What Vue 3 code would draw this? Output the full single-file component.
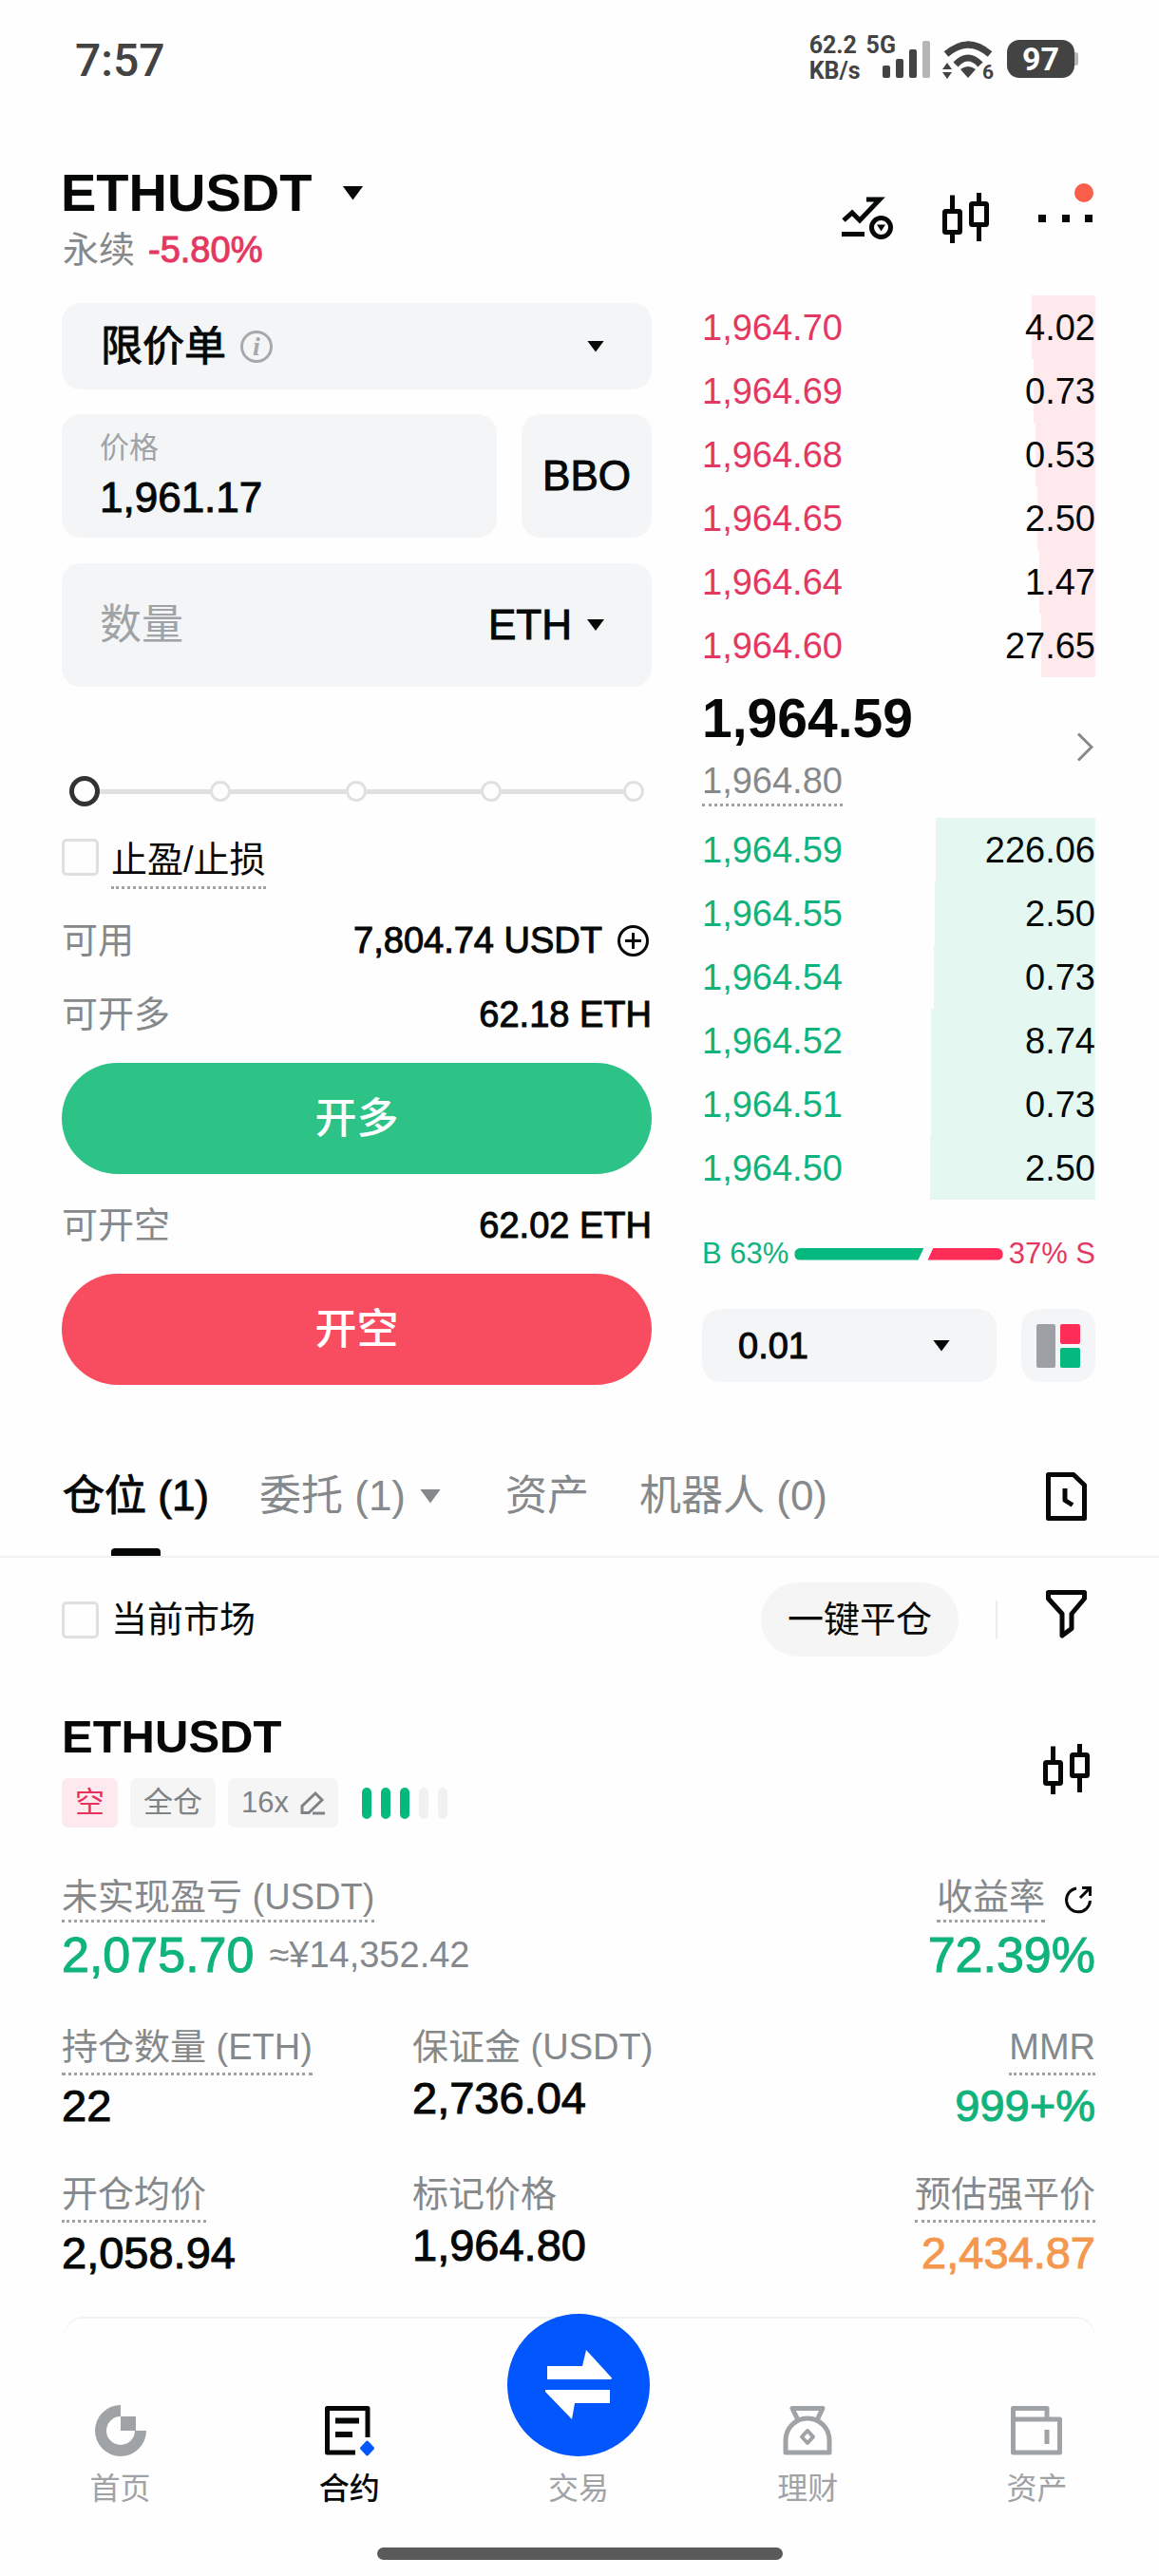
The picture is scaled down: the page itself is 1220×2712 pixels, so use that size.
<script setup>
import { ref } from 'vue'

const orderType = ref('limit')
const price = ref('1,961.17')
const amount = ref('')
const unit = ref('ETH')
const percent = ref(0)
const tpsl = ref(false)
const onlyCurrent = ref(false)
const tick = ref('0.01')

const asks = [
  { price: '1,964.70', size: '4.02', depth: 16.2 },
  { price: '1,964.69', size: '0.73', depth: 15.7 },
  { price: '1,964.68', size: '0.53', depth: 15.2 },
  { price: '1,964.65', size: '2.50', depth: 14.7 },
  { price: '1,964.64', size: '1.47', depth: 14.3 },
  { price: '1,964.60', size: '27.65', depth: 13.8 },
]
const bids = [
  { price: '1,964.59', size: '226.06', depth: 40.6 },
  { price: '1,964.55', size: '2.50', depth: 40.8 },
  { price: '1,964.54', size: '0.73', depth: 41 },
  { price: '1,964.52', size: '8.74', depth: 41.8 },
  { price: '1,964.51', size: '0.73', depth: 41.9 },
  { price: '1,964.50', size: '2.50', depth: 42 },
]
const ratio = { buy: 63, sell: 37 }

const tabs = [
  { name: '仓位 (1)', active: true },
  { name: '委托 (1)', menu: true },
  { name: '资产' },
  { name: '机器人 (0)' },
]

const stats = [
  { label: '持仓数量 (ETH)', value: '22', dotted: true },
  { label: '保证金 (USDT)', value: '2,736.04' },
  { label: 'MMR', value: '999+%', dotted: true, tone: 'up' },
  { label: '开仓均价', value: '2,058.94', dotted: true },
  { label: '标记价格', value: '1,964.80' },
  { label: '预估强平价', value: '2,434.87', dotted: true, tone: 'warn' },
]
</script>

<template>
  <div class="page">
    <svg class="defs" aria-hidden="true">
      <symbol id="candles" viewBox="0 0 49 53">
        <g fill="none" stroke="#050807" stroke-width="5">
          <path d="M10.5 2.5V18M10.5 43V53M38.5 0V10M38.5 35V51" />
          <rect x="2.5" y="19.5" width="16" height="22" rx="1" />
          <rect x="30.5" y="11.5" width="16" height="22" rx="1" />
        </g>
      </symbol>
    </svg>

    <div class="status">
      <span class="clock">7:57</span>
      <div class="status-right">
        <div class="speed"><span>62.2</span><span>KB/s</span></div>
        <span class="net">5G</span>
        <svg class="signal" width="50" height="39" viewBox="0 0 50 39">
          <g fill="#434343">
            <rect x="0" y="26" width="8" height="13" rx="2" />
            <rect x="14" y="19" width="8" height="20" rx="2" />
            <rect x="28" y="9" width="8" height="30" rx="2" />
          </g>
          <rect x="42" y="0" width="8" height="39" rx="2" fill="#b5b5b5" />
        </svg>
        <svg class="wifi" width="56" height="48" viewBox="0 0 56 48">
          <g fill="none" stroke="#434343" stroke-width="7">
            <path d="M4 15Q27 -5 50 15" />
            <path d="M14 26Q27 12 40 26" />
          </g>
          <path d="M19 31Q27 25 35 31L27 40ZM5 24L10 31H0ZM5 41L10 34H0Z" fill="#434343" />
          <text x="42" y="41" font-size="21" font-weight="700" fill="#434343">6</text>
        </svg>
        <div class="battery">97</div>
      </div>
    </div>

    <header class="head">
      <div>
        <button class="symbol" type="button"><h1>ETHUSDT</h1><i class="caret large"></i></button>
        <p class="change"><span class="muted">永续</span><span class="down med">-5.80%</span></p>
      </div>
      <div class="head-icons">
        <button type="button" aria-label="指标">
          <svg width="54" height="46" viewBox="0 0 54 46">
            <g fill="none" stroke="#050807" stroke-width="5">
              <path d="M2 25L11 17L19 25L40 3H26M0 39.500H24" />
              <circle cx="41.500" cy="32.500" r="10" />
            </g>
            <path d="M37 29.500H46L41.500 36.500Z" fill="#050807" />
          </svg>
        </button>
        <button type="button" aria-label="K线">
          <svg width="49" height="53"><use href="#candles" /></svg>
        </button>
        <button class="more" type="button" aria-label="更多">
          <i></i><i></i><i></i><b></b>
        </button>
      </div>
    </header>

    <main>
      <div class="trade">
        <form class="form" @submit.prevent>
          <div class="field type">
            <select v-model="orderType" class="med" aria-label="订单类型">
              <option value="limit">限价单</option>
            </select>
            <button class="info" type="button" aria-label="说明">i</button>
            <i class="caret push"></i>
          </div>
          <div class="price-row">
            <label class="field price">
              <span>价格</span>
              <input v-model="price" class="med" type="text" />
            </label>
            <button class="field bbo med" type="button">BBO</button>
          </div>
          <div class="field amount">
            <input v-model="amount" type="text" placeholder="数量" aria-label="数量" />
            <select v-model="unit" class="med" aria-label="单位">
              <option>ETH</option>
            </select>
            <i class="caret"></i>
          </div>
          <div class="slider">
            <div class="stops" aria-hidden="true">
              <i class="seg seg-start"></i><b></b><i class="seg"></i><b></b><i class="seg"></i><b></b><i class="seg seg-end"></i><b></b>
            </div>
            <input v-model="percent" type="range" min="0" max="100" aria-label="仓位比例" />
          </div>
          <label class="check tpsl"><input v-model="tpsl" type="checkbox" /><span class="dotted">止盈/止损</span></label>
          <div class="line">
            <span class="muted">可用</span>
            <span class="avail med">7,804.74 USDT
              <button type="button" aria-label="充值">
                <svg width="33" height="33" viewBox="0 0 33 33" fill="none" stroke="#050807" stroke-width="3">
                  <circle cx="16.500" cy="16.500" r="15" /><path d="M8 16.500H25M16.500 8V25" />
                </svg>
              </button>
            </span>
          </div>
          <div class="line"><span class="muted">可开多</span><span class="med">62.18 ETH</span></div>
          <button class="submit long" type="button">开多</button>
          <div class="line"><span class="muted">可开空</span><span class="med">62.02 ETH</span></div>
          <button class="submit short" type="button">开空</button>
        </form>

        <section class="book">
          <table class="asks">
            <tbody>
              <tr v-for="row in asks" :key="row.price" :style="{ '--depth': row.depth + '%' }">
                <td>{{ row.price }}</td>
                <td>{{ row.size }}</td>
              </tr>
            </tbody>
          </table>
          <div class="last">
            <div>
              <strong>1,964.59</strong>
              <span class="dotted muted">1,964.80</span>
            </div>
            <svg width="18" height="31" viewBox="0 0 18 31" fill="none" stroke="#86898b" stroke-width="3">
              <path d="M2 1.500L16 15.500L2 29.500" />
            </svg>
          </div>
          <table class="bids">
            <tbody>
              <tr v-for="row in bids" :key="row.price" :style="{ '--depth': row.depth + '%' }">
                <td>{{ row.price }}</td>
                <td>{{ row.size }}</td>
              </tr>
            </tbody>
          </table>
          <div class="ratio">
            <span class="up">B {{ ratio.buy }}%</span>
            <div class="ratio-bar">
              <i class="buy" :style="{ flexGrow: ratio.buy }"></i>
              <i class="sell" :style="{ flexGrow: ratio.sell }"></i>
            </div>
            <span class="down">{{ ratio.sell }}% S</span>
          </div>
          <div class="book-tools">
            <div class="field tick">
              <select v-model="tick" class="med" aria-label="精度"><option>0.01</option></select>
              <i class="caret"></i>
            </div>
            <button class="field view" type="button" aria-label="盘口样式">
              <svg width="46" height="46" viewBox="0 0 46 46">
                <rect width="20" height="46" rx="2" fill="#9da1a5" />
                <rect x="25" width="21" height="21" rx="2" fill="#fe2d58" />
                <rect x="25" y="25" width="21" height="21" rx="2" fill="#04b87e" />
              </svg>
            </button>
          </div>
        </section>
      </div>

      <div class="tabs">
        <button v-for="tab in tabs" :key="tab.name" type="button" :class="{ active: tab.active }">
          {{ tab.name }}<i v-if="tab.menu" class="caret large"></i>
        </button>
        <button class="history" type="button" aria-label="历史">
          <svg width="43" height="51" viewBox="0 0 43 51" fill="none" stroke="#050807" stroke-width="5" stroke-linejoin="round">
            <path d="M2.500 2.500H29L40.500 13.500V48.500H2.500Z" /><path d="M20 17V29.500L28 34.500" />
          </svg>
        </button>
      </div>

      <div class="filters">
        <label class="check"><input v-model="onlyCurrent" type="checkbox" /><span>当前市场</span></label>
        <button class="close-all" type="button">一键平仓</button>
        <i class="bar"></i>
        <button class="funnel" type="button" aria-label="筛选">
          <svg width="43" height="51" viewBox="0 0 43 51" fill="none" stroke="#050807" stroke-width="5" stroke-linejoin="round">
            <path d="M2.500 2.500H40.500V9L27 25V40.500L17 48V25L2.500 9Z" />
          </svg>
        </button>
      </div>

      <article class="position">
        <div class="pos-head">
          <div>
            <h2>ETHUSDT</h2>
            <div class="tags">
              <span class="tag short-tag">空</span>
              <span class="tag">全仓</span>
              <button class="tag" type="button">16x
                <svg width="26" height="25" viewBox="0 0 26 25" fill="none" stroke="#808385" stroke-width="3">
                  <path d="M16 2L23 9L9 22.500H2V15.500ZM13 23H26" />
                </svg>
              </button>
              <div class="risk"><i v-for="n in 5" :key="n" :class="{ on: n <= 3 }"></i></div>
            </div>
          </div>
          <button type="button" aria-label="K线"><svg width="49" height="53"><use href="#candles" /></svg></button>
        </div>

        <div class="pnl">
          <div>
            <span class="label dotted">未实现盈亏 (USDT)</span>
            <p><b class="up med">2,075.70</b><span class="muted">≈¥14,352.42</span></p>
          </div>
          <div class="right">
            <div class="roi">
              <span class="label dotted">收益率</span>
              <button type="button" aria-label="分享">
                <svg width="30" height="30" viewBox="0 0 30 30" fill="none" stroke="#050807" stroke-width="3">
                  <path d="M13 3A12.500 12.500 0 1 0 27.500 16M17 13L27 3M19 2.500H27.500V11" />
                </svg>
              </button>
            </div>
            <p><b class="up med">72.39%</b></p>
          </div>
        </div>

        <dl class="stats">
          <div v-for="s in stats" :key="s.label">
            <dt class="label" :class="{ dotted: s.dotted }">{{ s.label }}</dt>
            <dd class="med" :class="s.tone">{{ s.value }}</dd>
          </div>
        </dl>
      </article>
      <div class="next-card"></div>
    </main>

    <nav>
      <a href="#home">
        <svg width="54" height="54" viewBox="0 0 54 54" fill="#a0a3a6">
          <path d="M27 0A27 27 0 1 0 54 27H42A15 15 0 1 1 27 12Z" /><rect x="27" y="12" width="16" height="15" />
        </svg>
        <span>首页</span>
      </a>
      <a href="#futures" class="active">
        <svg width="54" height="54" viewBox="0 0 54 54" fill="none" stroke="#050807" stroke-width="5">
          <path d="M33 50H3.500V3.500H46V34" stroke-linejoin="round" />
          <path d="M12 16.500H37M12 31H30" stroke-width="6" />
          <path d="M45.500 39L51.500 45.500L45.500 52L39.500 45.500Z" fill="#0256fe" stroke="#0256fe" stroke-width="3" stroke-linejoin="round" />
        </svg>
        <span>合约</span>
      </a>
      <a href="#trade">
        <i class="disc">
          <svg width="70" height="74" viewBox="0 0 70 74" fill="#fff">
            <path d="M2 17H39L43 0L70 29.500Q70 31 68 31H2ZM0 42H68V56H31L28 73L0 44Z" />
          </svg>
        </i>
        <span>交易</span>
      </a>
      <a href="#earn">
        <svg width="54" height="54" viewBox="0 0 54 54" fill="none" stroke="#a0a3a6" stroke-width="5" stroke-linejoin="round">
          <path d="M17 16L11 3.500H43L37 16M4 50V37A23 23 0 0 1 50 37V50Z" />
          <path d="M27 27L33 33.500L27 40L21 33.500Z" stroke-width="4" />
        </svg>
        <span>理财</span>
      </a>
      <a href="#assets">
        <svg width="54" height="54" viewBox="0 0 54 54" fill="none" stroke="#a0a3a6" stroke-width="5" stroke-linejoin="round">
          <path d="M2.500 15V3.500H38V15" /><rect x="2.500" y="15" width="49" height="35" /><path d="M38 26V41" />
        </svg>
        <span>资产</span>
      </a>
    </nav>
    <div class="home-bar"></div>
  </div>
</template>

<style>
body {
  margin: 0;
  background: #fefefe;
}
</style>

<style scoped>
.page,
.page * {
  box-sizing: border-box;
}
.page {
  padding-bottom: 20px;
  color: #050807;
  background: #fefefe;
  font-family: "Liberation Sans", "Noto Sans CJK SC", sans-serif;
  font-size: 38px;
  line-height: 44px;
}
.defs {
  position: absolute;
  width: 0;
  height: 0;
}
svg {
  display: block;
  flex: none;
}
button,
select,
input {
  margin: 0;
  padding: 0;
  border: 0;
  background: none;
  color: inherit;
  font: inherit;
  appearance: none;
  outline: none;
}
h1,
h2,
p,
dl,
dd {
  margin: 0;
}
.med {
  -webkit-text-stroke: 1px currentColor;
}
.muted {
  color: #86898b;
}
.up {
  color: #10b37c;
}
.down {
  color: #e33862;
}
.warn {
  color: #f5984f;
}
.dotted {
  border-bottom: 3px dotted #a0a3a5;
}
.caret {
  flex: none;
  width: 18px;
  height: 12px;
  background: currentColor;
  clip-path: polygon(0 0, 100% 0, 50% 100%);
}
.caret.large {
  width: 22px;
  height: 15px;
}

.status {
  display: flex;
  justify-content: space-between;
  padding: 34px 89px 0 79px;
  color: #434343;
  font-family: Roboto, sans-serif;
  font-weight: 700;
}
.clock {
  font-size: 48px;
  font-weight: 500;
  line-height: 60px;
}
.status-right {
  display: flex;
  align-items: flex-start;
  font-size: 25px;
  line-height: 27px;
}
.speed {
  display: flex;
  flex-direction: column;
}
.net {
  margin-left: 6px;
}
.signal {
  margin: 9px 0 0 -14px;
}
.wifi {
  margin: 8px 12px 0 13px;
}
.battery {
  position: relative;
  width: 71px;
  height: 40px;
  margin-top: 8px;
  border-radius: 13px;
  background: #434343;
  color: #fff;
  font-size: 34px;
  line-height: 41px;
  text-align: center;
}
.battery::after {
  content: "";
  position: absolute;
  top: 13px;
  right: -4px;
  width: 4px;
  height: 14px;
  border-radius: 0 3px 3px 0;
  background: #b5b5b5;
}

.head {
  display: flex;
  justify-content: space-between;
  padding: 77px 67px 19px 64px;
}
.symbol {
  display: flex;
  align-items: center;
  gap: 32px;
}
.symbol h1 {
  font-size: 56px;
  line-height: 64px;
}
.change {
  display: flex;
  gap: 14px;
  padding-left: 2px;
  line-height: 57px;
}
.head-icons {
  display: flex;
  align-items: center;
  gap: 52px;
  padding-bottom: 4px;
}
.more {
  position: relative;
  display: flex;
  justify-content: space-between;
  width: 60px;
  padding-right: 3px;
}
.more i {
  width: 8px;
  height: 8px;
  background: #050807;
}
.more b {
  position: absolute;
  right: 2px;
  bottom: 21px;
  width: 20px;
  height: 20px;
  border-radius: 50%;
  background: #fa5f4b;
}

.trade {
  display: grid;
  grid-template-columns: minmax(0, 3fr) minmax(0, 2fr);
  column-gap: 53px;
  padding: 0 67px 0 65px;
}
.form {
  display: flex;
  flex-direction: column;
  padding-top: 8px;
}
.field {
  display: flex;
  align-items: center;
  border-radius: 20px;
  background: #f4f5f7;
  font-size: 44px;
}
.type {
  height: 91px;
  padding: 0 50px 0 41px;
}
.info {
  width: 34px;
  height: 34px;
  margin-left: 15px;
  border: 3px solid #a6a8aa;
  border-radius: 50%;
  color: #a6a8aa;
  font: italic 700 28px/26px "Liberation Serif", serif;
  text-align: center;
}
.push {
  margin-left: auto;
}
.price-row {
  display: flex;
  gap: 26px;
  margin: 26px 0 27px;
}
.price {
  flex: 1;
  flex-direction: column;
  align-items: stretch;
  height: 130px;
  padding: 16px 40px;
}
.price span {
  color: #a0a3a5;
  font-size: 31px;
  line-height: 40px;
}
.price input {
  width: 100%;
  height: 52px;
  margin-top: 6px;
}
.bbo {
  justify-content: center;
  width: 137px;
}
.amount {
  height: 130px;
  padding: 0 50px 0 40px;
}
.amount input {
  flex: 1;
  min-width: 0;
}
.amount input::placeholder {
  color: #a0a3a5;
  opacity: 1;
}
.amount .caret {
  margin-left: 16px;
}

.slider {
  position: relative;
  margin: 94px 8px 34px;
}
.stops {
  display: flex;
  align-items: center;
  height: 32px;
  padding-left: 31px;
}
.stops b {
  width: 22px;
  height: 22px;
  border: 3px solid #dfe0e0;
  border-radius: 50%;
}
.seg {
  flex: 120;
  height: 5px;
  background: #dfe0e0;
}
.seg-start {
  flex-grow: 117;
}
.seg-end {
  flex-grow: 127;
}
.slider input {
  position: absolute;
  inset: 0;
  width: 100%;
  height: 32px;
}
.slider input::-webkit-slider-thumb {
  appearance: none;
  width: 32px;
  height: 32px;
  border: 5px solid #303233;
  border-radius: 50%;
  background: #fefefe;
}

.check {
  display: flex;
  align-items: center;
  gap: 13px;
}
.check input {
  width: 39px;
  height: 39px;
  border: 3px solid #dfe0e0;
  border-radius: 5px;
}
.tpsl {
  align-items: flex-start;
}
.tpsl .dotted {
  padding-bottom: 6px;
}
.line {
  display: flex;
  align-items: center;
  justify-content: space-between;
  margin-top: 30px;
  line-height: 48px;
}
.avail {
  display: flex;
  align-items: center;
  gap: 16px;
  padding-right: 3px;
}
.submit {
  height: 117px;
  margin-top: 27px;
  border-radius: 59px;
  color: #fff;
  font-size: 44px;
  font-weight: 500;
}
.long {
  background: #2dc387;
}
.short {
  background: #f84c60;
}

.book table {
  width: 100%;
  border-collapse: collapse;
}
.book td {
  height: 67px;
  padding: 0;
}
.book td:first-child {
  color: var(--tone);
}
.book td:last-child {
  text-align: right;
}
.book tr {
  background: linear-gradient(to left, var(--fill) var(--depth), transparent var(--depth));
}
.asks {
  --tone: #e33862;
  --fill: #fee9ed;
}
.bids {
  --tone: #10b37c;
  --fill: #e4f8f1;
}
.last {
  display: flex;
  align-items: center;
  justify-content: space-between;
  padding: 11px 2px 12px 0;
}
.last div {
  display: flex;
  flex-direction: column;
  align-items: flex-start;
  gap: 12px;
}
.last strong {
  font-size: 57px;
  line-height: 64px;
}
.last span {
  padding-bottom: 2px;
}
.ratio {
  display: flex;
  align-items: center;
  gap: 6px;
  margin: 37px 0 38px;
  font-size: 31px;
  line-height: 40px;
}
.ratio-bar {
  display: flex;
  flex: 1;
  height: 13px;
}
.ratio-bar i {
  flex: 1 1 0;
}
.buy {
  border-radius: 7px 0 0 7px;
  background: #04b87e;
  clip-path: polygon(0 0, calc(100% - 2px) 0, calc(100% - 8px) 100%, 0 100%);
}
.sell {
  border-radius: 0 7px 7px 0;
  background: #fe2d58;
  clip-path: polygon(8px 0, 100% 0, 100% 100%, 2px 100%);
}
.book-tools {
  display: flex;
  gap: 26px;
}
.book-tools .field {
  height: 77px;
}
.tick {
  flex: 1;
  padding: 0 49px 0 38px;
}
.field.tick {
  font-size: 38px;
}
.tick select {
  flex: 1;
}
.view {
  justify-content: center;
  width: 78px;
}

.tabs {
  display: flex;
  gap: 53px;
  margin-top: 85px;
  padding: 0 76px 0 66px;
  border-bottom: 2px solid #f0f1f1;
  color: #86898b;
  font-size: 44px;
  line-height: 64px;
}
.tabs button {
  position: relative;
  display: flex;
  align-items: center;
  padding-bottom: 31px;
}
.tabs .caret {
  margin: 0 15px;
}
.tabs .active {
  color: #050807;
  -webkit-text-stroke: 1px currentColor;
}
.tabs .active::after {
  content: "";
  position: absolute;
  bottom: 0;
  left: calc(50% - 26px);
  width: 52px;
  height: 8px;
  border-radius: 4px 4px 0 0;
  background: #050807;
}
.tabs .history {
  margin-left: auto;
}
.filters {
  display: flex;
  align-items: center;
  padding: 26px 76px 0 65px;
}
.close-all {
  height: 78px;
  margin-left: auto;
  padding: 0 28px;
  border-radius: 39px;
  background: #f5f5f5;
}
.bar {
  width: 2px;
  height: 40px;
  margin: 0 51px 0 39px;
  background: #ebecec;
}
.funnel {
  padding-bottom: 11px;
}

.position {
  padding: 56px 67px 0 65px;
}
.pos-head {
  display: flex;
  align-items: center;
  justify-content: space-between;
  padding-right: 6px;
}
h2 {
  font-size: 49px;
  line-height: 56px;
}
.tags {
  display: flex;
  gap: 13px;
  margin-top: 16px;
}
.tag {
  display: flex;
  align-items: center;
  gap: 12px;
  height: 52px;
  padding: 0 14px;
  border-radius: 7px;
  background: #f5f5f5;
  color: #808385;
  font-size: 31px;
}
.short-tag {
  background: #fee9ee;
  color: #e8305c;
}
.risk {
  display: flex;
  align-items: center;
  gap: 10px;
  margin-left: 12px;
}
.risk i {
  width: 10px;
  height: 33px;
  border-radius: 5px;
  background: #f0f1f2;
}
.risk .on {
  background: #04b87e;
}
.label {
  color: #86898b;
}
.pnl {
  display: flex;
  justify-content: space-between;
  margin-top: 51px;
}
.pnl > div {
  display: flex;
  flex-direction: column;
  align-items: flex-start;
  gap: 4px;
}
.pnl .dotted {
  padding-bottom: 2px;
}
.pnl .right {
  align-items: flex-end;
}
.pnl p {
  display: flex;
  align-items: center;
  gap: 16px;
  line-height: 60px;
}
.pnl b {
  font-size: 52px;
  font-weight: 400;
}
.roi {
  display: flex;
  align-items: center;
  gap: 20px;
  padding-right: 3px;
}
.stats {
  display: grid;
  grid-template-columns: 369fr 330fr 389fr;
  row-gap: 45px;
  margin-top: 45px;
}
.stats > div {
  display: flex;
  flex-direction: column;
  align-items: flex-start;
}
.stats > div:nth-child(3n) {
  align-items: flex-end;
}
.stats .dotted {
  padding-bottom: 5px;
}
.stats dd {
  margin-top: 6px;
  font-size: 47px;
  line-height: 52px;
}
.next-card {
  height: 20px;
  margin: 41px 67px 0;
  border: 2px solid #eff3f3;
  border-bottom: 0;
  border-radius: 20px 20px 0 0;
  mask-image: linear-gradient(#000 20%, transparent);
}

nav {
  position: relative;
  display: flex;
  align-items: flex-end;
  margin-top: -23px;
  padding: 0 8px 0 6px;
}
nav a {
  display: flex;
  flex: 1;
  flex-direction: column;
  align-items: center;
  gap: 14px;
  color: #a0a3a6;
  font-size: 32px;
  line-height: 40px;
  text-decoration: none;
}
nav .active {
  color: #050807;
  font-weight: 500;
}
.disc {
  display: flex;
  align-items: center;
  justify-content: center;
  width: 150px;
  height: 150px;
  border-radius: 50%;
  background: #0256fe;
}
.home-bar {
  width: 35%;
  height: 13px;
  margin: 42px auto 0;
  border-radius: 7px;
  background: #5a5a5a;
}
</style>
